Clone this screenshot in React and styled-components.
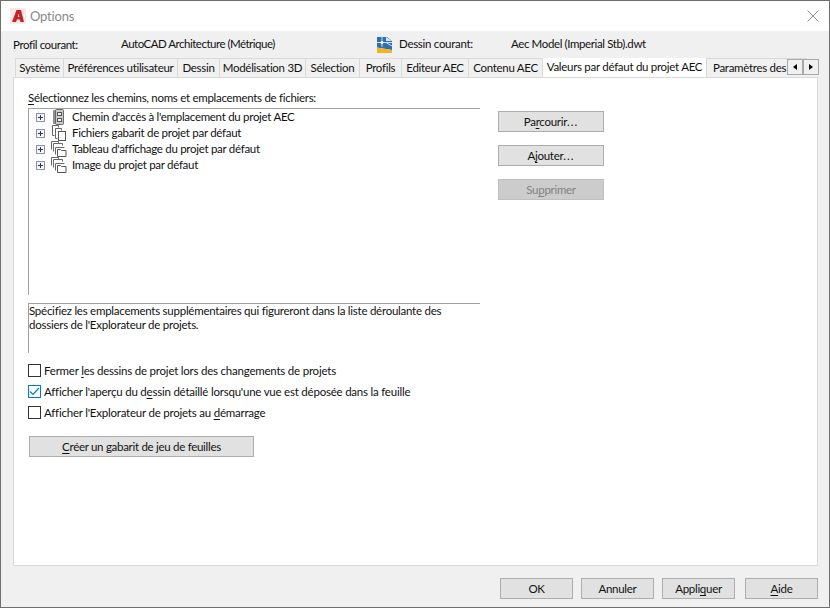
import React from 'react'
import styled, { createGlobalStyle } from 'styled-components'

const GlobalStyle = createGlobalStyle`
  html, body { margin: 0; padding: 0; background: #f0f0f0; }
  body { font-family: Lato, "Liberation Sans", sans-serif; font-size: 11.5px; letter-spacing: -0.29px; color: #111; }
  u { text-underline-offset: 2px; text-decoration-thickness: 1px; }
`

const Window = styled.div`
  box-sizing: border-box;
  width: 830px;
  height: 608px;
  border: 1px solid #6f6f6f;
  display: flex;
  flex-direction: column;
  background: #f0f0f0;
`

const TitleBar = styled.div`
  height: 30px;
  flex: none;
  background: #fff;
  display: flex;
  align-items: center;
  padding: 0 10px 0 9px;
  gap: 4px;
`

const TitleText = styled.span`
  font-size: 13px;
  letter-spacing: -0.2px;
  color: #8a8a8a;
  flex: 1;
`

const Body = styled.div`
  flex: 1;
  display: flex;
  flex-direction: column;
  padding: 0 11px 0 12px;
`

const ProfileRow = styled.div`
  height: 27px;
  flex: none;
  display: flex;
  align-items: center;
`

const InfoText = styled.span`
  width: ${p => p.$w}px;
  flex: none;
  position: relative;
  top: ${p => p.$top || 0}px;
  letter-spacing: ${p => p.$track || -0.29}px;
`

const DrawingIcon = styled.svg`
  flex: none;
  width: 15px;
  height: 16px;
  margin-right: 7px;
`

const TabStrip = styled.div`
  position: relative;
  height: 19px;
  flex: none;
  display: flex;
  padding-left: 2px;
  z-index: 1;
  overflow: hidden;
`

const Tab = styled.div`
  box-sizing: border-box;
  width: ${p => p.$w}px;
  flex: none;
  height: 19px;
  background: #f0f0f0;
  border: 1px solid #d9d9d9;
  border-left-width: ${p => (p.$first ? 1 : 0)}px;
  border-bottom: none;
  text-align: center;
  line-height: 18px;
  white-space: nowrap;
`

const ActiveTab = styled(Tab)`
  height: 22px;
  margin-top: -1px;
  background: #fff;
  line-height: 17px;
  border-left-width: 0;
`

const ClippedTab = styled(Tab)`
  text-align: left;
  padding-left: 6px;
  border-right: none;
`

const TabStripWrap = styled.div`
  position: relative;
  flex: none;
`

const ScrollButtons = styled.div`
  position: absolute;
  right: -1px;
  top: 1px;
  display: flex;
  z-index: 3;
`

const ScrollButton = styled.div`
  box-sizing: border-box;
  width: 16px;
  height: 16px;
  background: #f0f0f0;
  border: 1px solid #a8a8a8;
  display: flex;
  align-items: center;
  justify-content: center;
`

const Arrow = styled.span`
  width: 0;
  height: 0;
  border-top: 3.5px solid transparent;
  border-bottom: 3.5px solid transparent;
  ${p => (p.$left ? 'border-right: 4px solid #000;' : 'border-left: 4px solid #000;')}
`

const Panel = styled.div`
  box-sizing: border-box;
  height: 489px;
  flex: none;
  background: #fff;
  border: 1px solid #d9d9d9;
  padding: 12px 14px 0 14px;
  display: flex;
  gap: 18px;
`

const LeftColumn = styled.div`
  width: 452px;
  flex: none;
  display: flex;
  flex-direction: column;
`

const SectionLabel = styled.div`
  height: 18px;
  line-height: 16px;
`

const TreeBox = styled.div`
  box-sizing: border-box;
  height: 187px;
  border-top: 1px solid #a0a0a0;
  border-left: 1px solid #a0a0a0;
  padding: 0 0 0 7px;
`

const TreeRow = styled.div`
  height: 16px;
  display: flex;
  align-items: center;
`

const TreeLabel = styled.span`
  padding-bottom: 1px;
`

const Expander = styled.svg`
  width: 9px;
  height: 9px;
  flex: none;
  margin-right: 5px;
`

const TreeIcon = styled.svg`
  width: 17px;
  height: 16px;
  flex: none;
  margin-right: 5px;
`

const DescriptionBox = styled.div`
  box-sizing: border-box;
  height: 50px;
  margin-top: 8px;
  border-top: 1px solid #a0a0a0;
  border-left: 1px solid #a0a0a0;
  line-height: 14px;
  padding-top: 0;
  letter-spacing: -0.25px;
`

const CheckList = styled.div`
  margin-top: 9px;
  display: flex;
  flex-direction: column;
  gap: 5px;
  letter-spacing: -0.22px;
`

const CheckRow = styled.div`
  height: 16px;
  display: flex;
  align-items: center;
  gap: 3px;
`

const CheckBox = styled.div`
  box-sizing: border-box;
  width: 13px;
  height: 13px;
  background: #fff;
  border: 1px solid ${p => (p.$checked ? '#0078d7' : '#333')};
  display: flex;
  align-items: center;
  justify-content: center;
`

const Button = styled.div`
  box-sizing: border-box;
  width: ${p => p.$w || 106}px;
  height: 21px;
  flex: none;
  background: ${p => (p.$disabled ? '#cccccc' : '#e1e1e1')};
  border: 1px solid ${p => (p.$disabled ? '#bfbfbf' : '#adadad')};
  color: ${p => (p.$disabled ? '#838383' : '#111')};
  text-align: center;
  line-height: 19px;
`

const Dots = styled.span`
  letter-spacing: 1px;
`

const WideButton = styled(Button)`
  margin-top: 16px;
  margin-left: 1px;
`

const RightColumn = styled.div`
  padding-top: 21px;
  display: flex;
  flex-direction: column;
  gap: 13px;
`

const Footer = styled.div`
  flex: 1;
  display: flex;
  justify-content: flex-end;
  padding-top: 12px;
`

const FooterButton = styled(Button)`
  margin-left: ${p => p.$gap}px;
`

const tabs = [
  ['Système', 49],
  ['Préférences utilisateur', 114],
  ['Dessin', 42],
  ['Modélisation 3D', 86],
  ['Sélection', 54],
  ['Profils', 42],
  ['Editeur AEC', 67],
  ['Contenu AEC', 74],
]

function LogoIcon() {
  return (
    <svg width="16" height="16" viewBox="0 0 16 16">
      <rect width="16" height="16" fill="#fbe9e6" />
      <path d="M2 14 L6.5 2 H11 L14 14 H10.4 L9.9 11.6 H7 L6 14 Z M7.9 9 H9.4 L8.7 5.4 Z" fill="#c4232b" fillRule="evenodd" />
    </svg>
  )
}

function CloseIcon() {
  return (
    <svg width="12" height="12" viewBox="0 0 12 12">
      <path d="M0.5 0.5 L11.5 11.5 M11.5 0.5 L0.5 11.5" stroke="#8c8c8c" strokeWidth="1" />
    </svg>
  )
}

function PlusBox() {
  return (
    <Expander viewBox="0 0 9 9">
      <rect x="0.5" y="0.5" width="8" height="8" fill="#f4f5f8" stroke="#8d93a5" />
      <path d="M2 4.5 H7 M4.5 2 V7" stroke="#2b3555" />
    </Expander>
  )
}

function ProjectPathIcon() {
  return (
    <TreeIcon viewBox="0 0 17 16">
      <rect x="3" y="1" width="3" height="14" rx="1" fill="#8f8f8f" />
      <rect x="5.5" y="0.5" width="8" height="15" rx="1" fill="#c9c9c9" stroke="#6a6a6a" />
      <rect x="7.5" y="3.5" width="4" height="3" fill="#eee" stroke="#555" />
      <rect x="7.5" y="9.5" width="4" height="3" fill="#eee" stroke="#555" />
    </TreeIcon>
  )
}

function TemplateIcon() {
  return (
    <TreeIcon viewBox="0 0 17 16">
      <path d="M8.5 2.5 V0.5 H2.5 V10.5 H4.5" fill="none" stroke="#666" />
      <path d="M11.5 5.5 V3.5 H5.5 V13.5 H7.5" fill="none" stroke="#666" />
      <rect x="8.5" y="6.5" width="7" height="9" fill="#fff" stroke="#555" />
    </TreeIcon>
  )
}

function FolderStackIcon() {
  return (
    <TreeIcon viewBox="0 0 17 16">
      <path d="M8.5 2.5 V0.5 H1.5 V8.5" fill="none" stroke="#666" />
      <path d="M12.5 4.5 V2.5 H3.5 V10.5" fill="none" stroke="#666" />
      <path d="M14.5 6.5 H5.5 V13.5" fill="none" stroke="#666" />
      <path d="M7.5 15.5 V8.5 H10.5 L11.5 9.5 H16 V15.5 Z" fill="#fff" stroke="#555" />
    </TreeIcon>
  )
}

function SheetSetIcon() {
  return (
    <DrawingIcon viewBox="0 0 15 16">
      <path d="M0 0 H10 L15 4 V13 L0 10.5 Z" fill="#2f6fb0" />
      <path d="M0 5.5 H15 M5 0 V10 M9 5.5 L15 9" stroke="#cfe2f5" strokeWidth="1" />
      <circle cx="5" cy="5.5" r="1.5" fill="#fff" />
      <path d="M9 0 L15 4 H9 Z" fill="#d7e5f2" />
      <path d="M0 10.5 L15 13 V16 H0 Z" fill="#f5b31c" />
    </DrawingIcon>
  )
}

const treeRows = [
  ["Chemin d'accès à l'emplacement du projet AEC", ProjectPathIcon],
  ['Fichiers gabarit de projet par défaut', TemplateIcon],
  ["Tableau d'affichage du projet par défaut", FolderStackIcon],
  ['Image du projet par défaut', FolderStackIcon],
]

export default function App() {
  return (
    <Window>
      <GlobalStyle />
      <TitleBar>
        <LogoIcon />
        <TitleText>Options</TitleText>
        <CloseIcon />
      </TitleBar>
      <Body>
        <ProfileRow>
          <InfoText $w={108} $track={-0.42}>Profil courant:</InfoText>
          <InfoText $w={256} $top={-1} $track={-0.5}>AutoCAD Architecture (Métrique)</InfoText>
          <SheetSetIcon />
          <InfoText $w={112} $top={-1}>Dessin courant:</InfoText>
          <InfoText $w={200} $top={-1} $track={-0.38}>Aec Model (Imperial Stb).dwt</InfoText>
        </ProfileRow>
        <TabStripWrap>
          <TabStrip>
            {tabs.map(([label, w], i) => (
              <Tab key={label} $w={w} $first={i === 0}>{label}</Tab>
            ))}
            <ActiveTab $w={164}>Valeurs par défaut du projet AEC</ActiveTab>
            <ClippedTab $w={100}>Paramètres des</ClippedTab>
          </TabStrip>
          <ScrollButtons>
            <ScrollButton><Arrow $left /></ScrollButton>
            <ScrollButton><Arrow /></ScrollButton>
          </ScrollButtons>
        </TabStripWrap>
        <Panel>
          <LeftColumn>
            <SectionLabel><u>S</u>électionnez les chemins, noms et emplacements de fichiers:</SectionLabel>
            <TreeBox>
              {treeRows.map(([label, Icon]) => (
                <TreeRow key={label}>
                  <PlusBox />
                  <Icon />
                  <TreeLabel>{label}</TreeLabel>
                </TreeRow>
              ))}
            </TreeBox>
            <DescriptionBox>
              Spécifiez les emplacements supplémentaires qui figureront dans la liste déroulante des
              <br />
              dossiers de l'Explorateur de projets.
            </DescriptionBox>
            <CheckList>
              <CheckRow>
                <CheckBox />
                <span>Fermer <u>l</u>es dessins de projet lors des changements de projets</span>
              </CheckRow>
              <CheckRow>
                <CheckBox $checked>
                  <svg width="11" height="11" viewBox="0 0 11 11">
                    <path d="M1 5.5 L4 8.5 L10 2" fill="none" stroke="#0078d7" strokeWidth="1.2" />
                  </svg>
                </CheckBox>
                <span>Afficher l'aperçu du d<u>e</u>ssin détaillé lorsqu'une vue est déposée dans la feuille</span>
              </CheckRow>
              <CheckRow>
                <CheckBox />
                <span>Afficher l'Explorateur de projets au <u>d</u>émarrage</span>
              </CheckRow>
            </CheckList>
            <WideButton $w={225}><u>C</u>réer un gabarit de jeu de feuilles</WideButton>
          </LeftColumn>
          <RightColumn>
            <Button>Pa<u>r</u>courir<Dots>...</Dots></Button>
            <Button>A<u>j</u>outer<Dots>...</Dots></Button>
            <Button $disabled>Su<u>p</u>primer</Button>
          </RightColumn>
        </Panel>
        <Footer>
          <FooterButton $w={73} $gap={0}>OK</FooterButton>
          <FooterButton $w={73} $gap={8}>Annuler</FooterButton>
          <FooterButton $w={73} $gap={8}>Appli<u>q</u>uer</FooterButton>
          <FooterButton $w={73} $gap={10}><u>A</u>ide</FooterButton>
        </Footer>
      </Body>
    </Window>
  )
}
